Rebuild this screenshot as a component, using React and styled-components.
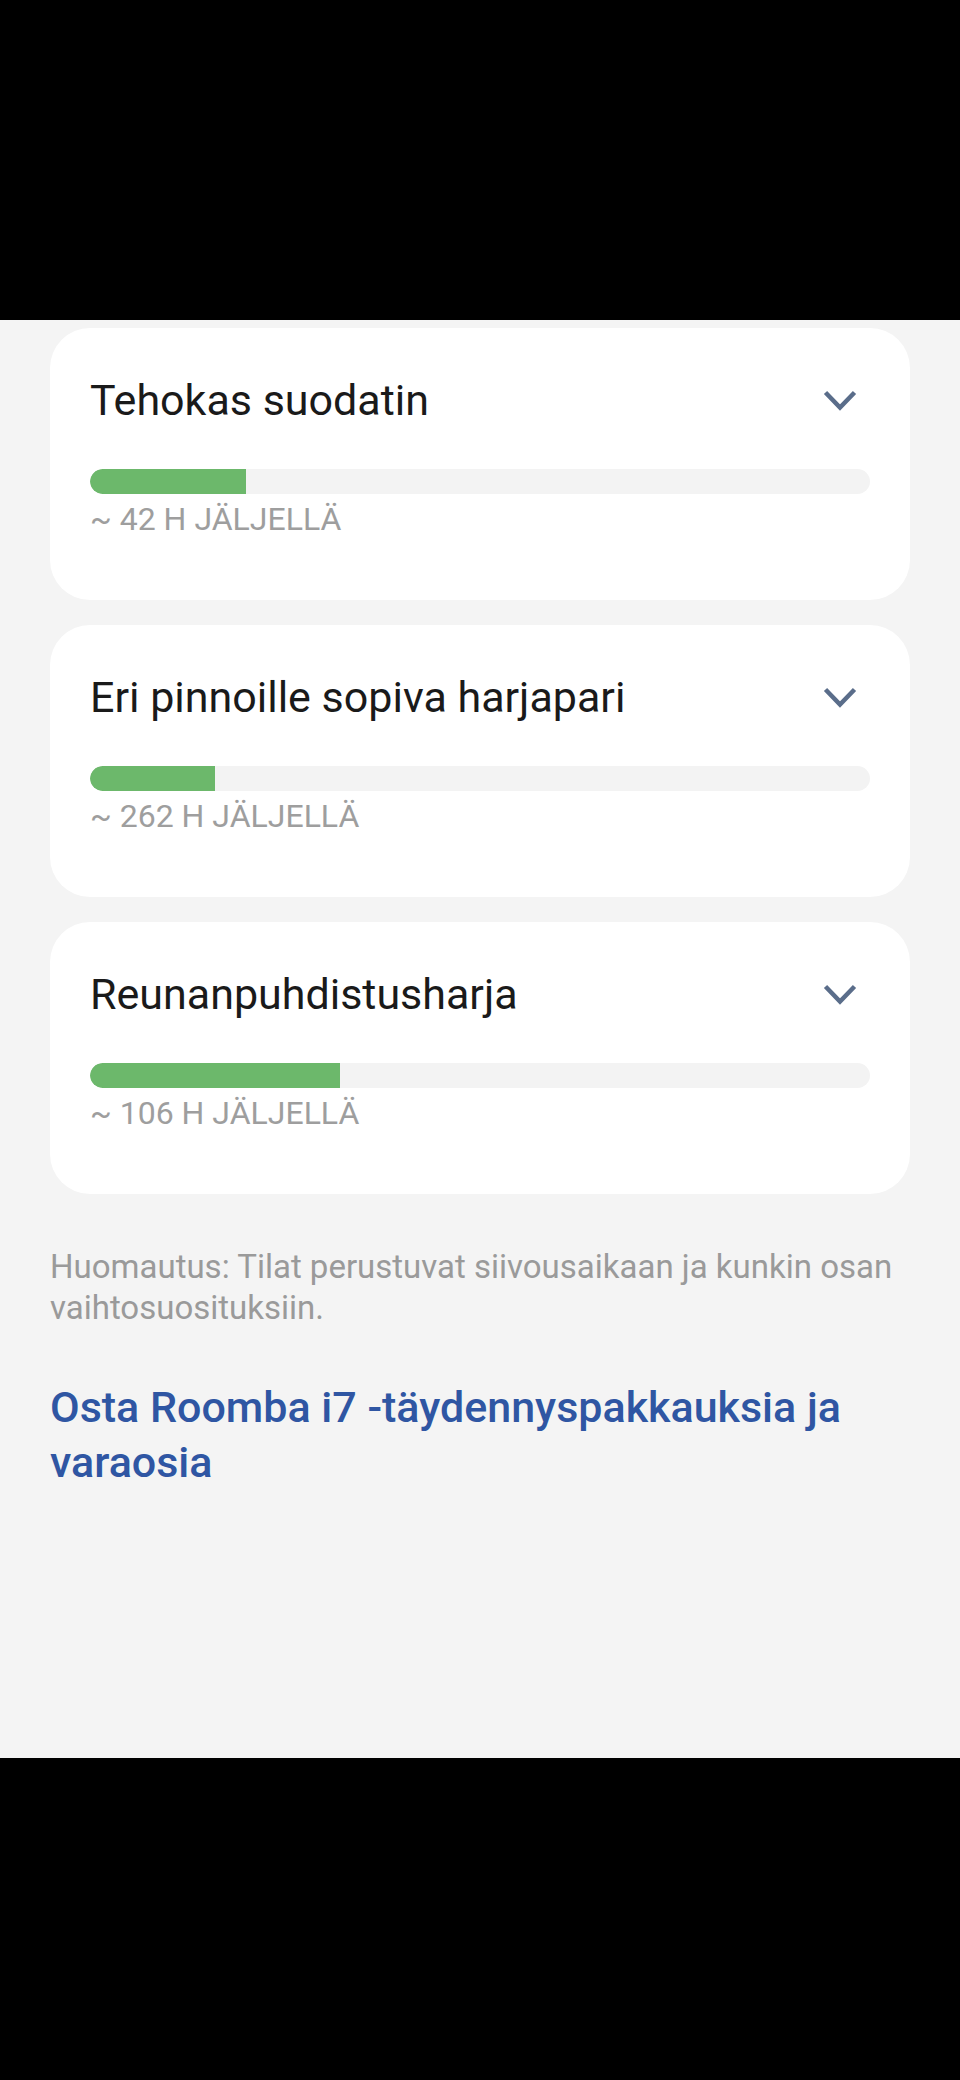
import React from 'react'
import styled, { createGlobalStyle } from 'styled-components'

const Global = createGlobalStyle`
  html, body {
    margin: 0;
    padding: 0;
    background: #000;
  }
  body {
    font-family: Roboto, "Noto Sans", "Liberation Sans", sans-serif;
    -webkit-font-smoothing: antialiased;
  }
`

const Page = styled.div`
  width: 960px;
  min-height: 2080px;
  background: #000;
  display: flex;
  flex-direction: column;
`

const BlackBand = styled.div`
  height: ${(p) => p.h}px;
  background: #000;
  flex-shrink: 0;
`

const Screen = styled.main`
  height: 1438px;
  box-sizing: border-box;
  background: #f4f4f4;
  padding: 8px 50px 0 50px;
  display: flex;
  flex-direction: column;
  gap: 25px;
  overflow: hidden;
`

const Card = styled.section`
  background: #fff;
  border-radius: 40px;
  padding: 47px 40px 61px 40px;
  display: flex;
  flex-direction: column;
`

const Header = styled.div`
  display: flex;
  align-items: center;
  justify-content: space-between;
`

const Title = styled.h2`
  margin: 0;
  font-size: 43px;
  line-height: 50px;
  font-weight: 400;
  color: #1a1a1a;
`

const Chevron = styled.svg`
  width: 34px;
  height: 21px;
  margin-right: 13px;
  flex-shrink: 0;
`

const Track = styled.div`
  margin-top: 44px;
  height: 25px;
  border-radius: 13px;
  background: #f3f3f3;
  overflow: hidden;
`

const Fill = styled.div`
  height: 100%;
  background: #6cb86b;
  border-radius: 13px 0 0 13px;
`

const Remaining = styled.div`
  margin-top: 5px;
  font-size: 32px;
  line-height: 40px;
  color: #9e9e9e;
  text-transform: uppercase;
`

const Note = styled.p`
  margin: 27px 0 0 0;
  font-size: 33px;
  line-height: 41px;
  color: #9a9a9a;
`

const ShopLink = styled.a`
  display: block;
  margin-top: 52px;
  font-size: 43px;
  line-height: 55px;
  font-weight: 500;
  color: #2f56a3;
  text-decoration: none;
`

const parts = [
  { name: 'Tehokas suodatin', hours: 42, pct: 20 },
  { name: 'Eri pinnoille sopiva harjapari', hours: 262, pct: 16 },
  { name: 'Reunanpuhdistusharja', hours: 106, pct: 32 },
]

function PartCard({ name, hours, pct }) {
  return (
    <Card>
      <Header>
        <Title>{name}</Title>
        <Chevron viewBox="0 0 34 21">
          <path d="M2.5 2.5 L17 17.5 L31.5 2.5" fill="none" stroke="#5a6d8a" strokeWidth="4.5" />
        </Chevron>
      </Header>
      <Track>
        <Fill style={{ width: `${pct}%` }} />
      </Track>
      <Remaining>~ {hours} h jäljellä</Remaining>
    </Card>
  )
}

export default function App() {
  return (
    <Page>
      <Global />
      <BlackBand h={320} />
      <Screen>
        {parts.map((p) => (
          <PartCard key={p.name} {...p} />
        ))}
        <div>
          <Note>Huomautus: Tilat perustuvat siivousaikaan ja kunkin osan vaihtosuosituksiin.</Note>
          <ShopLink href="#">Osta Roomba i7 -täydennyspakkauksia ja varaosia</ShopLink>
        </div>
      </Screen>
      <BlackBand h={322} />
    </Page>
  )
}
